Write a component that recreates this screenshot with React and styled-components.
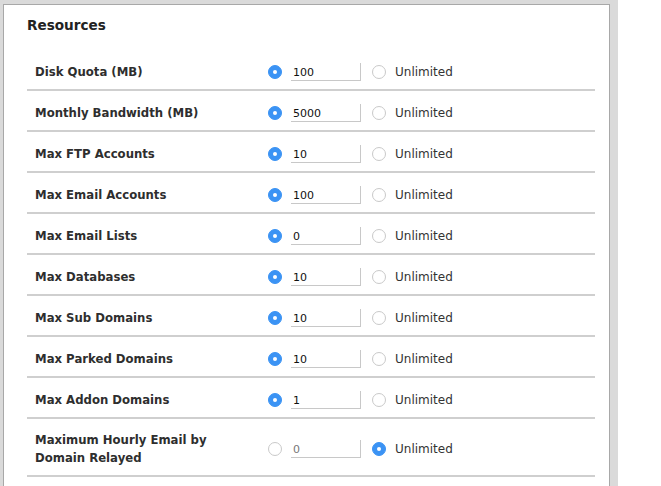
import React from 'react';
import styled, { createGlobalStyle } from 'styled-components';

const GlobalStyle = createGlobalStyle`
    html, body {
        margin: 0;
        padding: 0;
        background: #fff;
    }
    body {
        font-family: "DejaVu Sans", "Liberation Sans", sans-serif;
        color: #333;
    }
`;

const Backdrop = styled.div`
    width: 618px;
    height: 486px;
    background: #dadada;
    padding: 4px 8px 0 3px;
    box-sizing: border-box;
    overflow: hidden;
`;

const Panel = styled.div`
    background: #fff;
    border: 1px solid #a8a8a8;
    border-bottom: none;
    padding: 10px 14px 0 23px;
    height: 100%;
    box-sizing: border-box;
`;

const Title = styled.h2`
    margin: 0 0 15px;
    font-size: 13.6px;
    line-height: 20px;
    font-weight: bold;
    color: #222;
`;

const Row = styled.div`
    display: flex;
    align-items: center;
    padding: 12px 0 8px 8px;
    border-bottom: 2px solid #cfcfcf;
    min-height: 19px;
`;

const Label = styled.div`
    width: 233px;
    font-size: 11.7px;
    line-height: 18px;
    font-weight: bold;
    color: #2e2e2e;
`;

const Radio = styled.span`
    width: 14px;
    height: 14px;
    border-radius: 50%;
    box-sizing: border-box;
    flex: none;
    position: relative;
    background: ${p => (p.checked ? '#3b93f4' : '#fff')};
    border: 1px solid ${p => (p.checked ? '#3b93f4' : '#c9c9c9')};
    &::after {
        content: '';
        display: ${p => (p.checked ? 'block' : 'none')};
        position: absolute;
        left: 4px;
        top: 4px;
        width: 4px;
        height: 4px;
        border-radius: 50%;
        background: #fff;
    }
`;

const Field = styled.div`
    width: 67px;
    height: 17px;
    margin: 0 11px 0 9px;
    border-right: 1px solid #c8c8c8;
    border-bottom: 1px solid #c8c8c8;
    font-size: 11px;
    line-height: 20px;
    padding-left: 2px;
    box-sizing: content-box;
    color: ${p => (p.disabled ? '#777' : '#111')};
`;

const Option = styled.span`
    margin-left: 9px;
    font-size: 12px;
    color: #333;
`;

const rows = [
    { label: 'Disk Quota (MB)', value: '100' },
    { label: 'Monthly Bandwidth (MB)', value: '5000' },
    { label: 'Max FTP Accounts', value: '10' },
    { label: 'Max Email Accounts', value: '100' },
    { label: 'Max Email Lists', value: '0' },
    { label: 'Max Databases', value: '10' },
    { label: 'Max Sub Domains', value: '10' },
    { label: 'Max Parked Domains', value: '10' },
    { label: 'Max Addon Domains', value: '1' },
    { label: ['Maximum Hourly Email by', 'Domain Relayed'], value: '0', unlimited: true },
];

const ResourceRow = ({ label, value, unlimited }) => (
    <Row>
        <Label>
            {Array.isArray(label)
                ? label.map(l => <div key={l}>{l}</div>)
                : label}
        </Label>
        <Radio checked={!unlimited} />
        <Field disabled={unlimited}>{value}</Field>
        <Radio checked={!!unlimited} />
        <Option>Unlimited</Option>
    </Row>
);

export default function App() {
    return (
        <>
            <GlobalStyle />
            <Backdrop>
                <Panel>
                    <Title>Resources</Title>
                    {rows.map((r, i) => <ResourceRow key={i} {...r} />)}
                </Panel>
            </Backdrop>
        </>
    );
}
